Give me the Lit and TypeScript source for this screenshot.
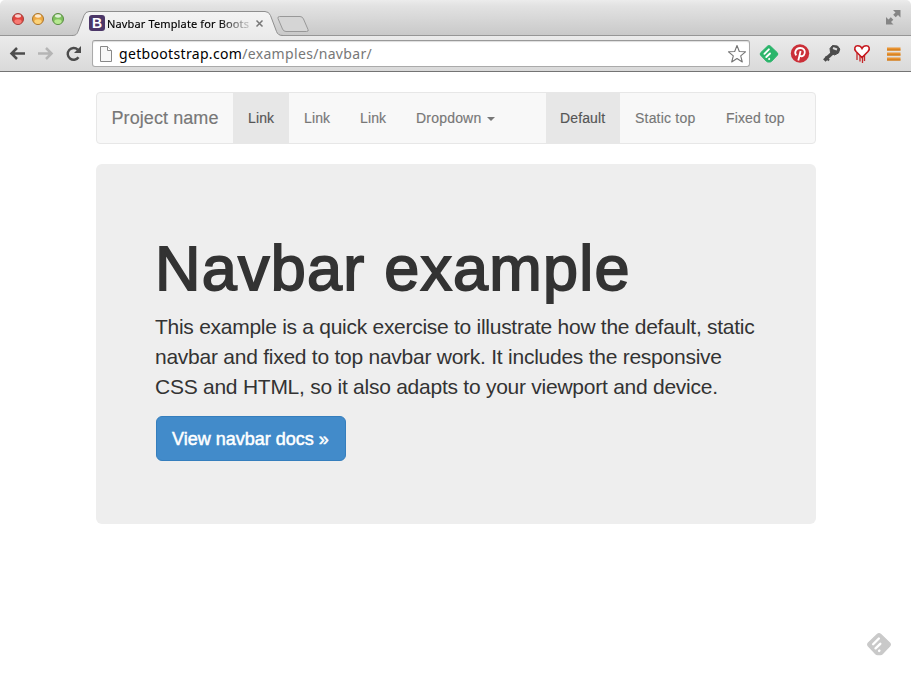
import { LitElement, html, css, svg } from "lit";
import { customElement } from "lit/decorators.js";

const feedly = (fill: string, ink: string) => svg`
  <path d="M8.6 1.1Q10 0 11.4 1.1L18.3 7.7Q19.4 9 18.3 10.3L12.6 16.3Q12 17 11 17H9Q8 17 7.4 16.3L1.7 10.3Q.6 9 1.7 7.7Z" fill=${fill} stroke=${fill} stroke-linejoin="round"/>
  <g stroke=${ink} stroke-width="1.900" stroke-linecap="round">
    <path d="M5.4 8.800 9.900 4.300M7.300 12 11 8.500M10.100 14 10.300 13.800"/>
  </g>`;

@customElement("browser-tabs")
class BrowserTabs extends LitElement {
  static styles = css`
    :host {
      display: flex;
      height: 36px;
      box-sizing: border-box;
      background: linear-gradient(#ececec 0, #e2e2e2 6px, #c9c9c9 35px, #969696 35px);
      border-radius: 5px 5px 0 0;
      font-family: "Noto Sans", "Open Sans", sans-serif;
    }
    .lights { width: 75px; padding: 12px 0 0 11px; box-sizing: border-box; }
    svg { display: block; }
    .tab { position: relative; width: 208px; height: 36px; }
    .shape { position: absolute; left: -3px; top: 0; }
    .content { position: relative; display: flex; padding: 15px 0 0 14px; }
    .favicon {
      width: 16px; height: 16px; border-radius: 3px; background: #4c3768; color: #fff;
      font: bold 14px/16px "Liberation Sans", sans-serif; text-align: center;
    }
    .title {
      width: 142px; margin-left: 2px; overflow: hidden; white-space: nowrap;
      font-size: 11px; line-height: 18px; color: #000; letter-spacing: 0.14px;
      -webkit-text-stroke: 0.15px #000;
      -webkit-mask-image: linear-gradient(90deg, #000 112px, transparent 148px);
    }
    .close { margin: 4px 0 0 6px; }
    .new { margin: 15px 0 0 -7px; }
    .full { margin: 10px 10px 0 auto; }
  `;
  light(x: number, edge: string, mid: string, glow: string) {
    return svg`<circle cx=${x} cy="7" r="5.5" fill=${mid} stroke=${edge}/>
      <ellipse cx=${x} cy="9.6" rx="3.6" ry="2.4" fill=${glow} opacity=".75"/>
      <ellipse cx=${x} cy="4" rx="3" ry="1.7" fill="#fff" opacity=".75"/>`;
  }
  render() {
    return html`
      <div class="lights">
        <svg width="56" height="14">
          ${this.light(7, "#a3403c", "#e0443e", "#ff8c86")}
          ${this.light(27, "#a9752c", "#eda843", "#ffe08a")}
          ${this.light(47, "#5a8c45", "#7fc05f", "#c8f5a0")}
        </svg>
      </div>
      <div class="tab">
        <svg class="shape" width="214" height="36">
          <defs><linearGradient id="g" x2="0" y2="1"><stop stop-color="#f4f4f4"/><stop offset="1" stop-color="#ebebeb"/></linearGradient></defs>
          <path d="M0 36V35.5C4 35.5 5 34 6 31.5L12 15.5Q13.5 11.5 17 11.5H193Q197 11.5 198.500 15.500L204.500 31.500C205.500 34 207 35.500 211 35.500V36Z" fill="url(#g)"/>
          <path d="M0 35.5C4 35.5 5 34 6 31.5L12 15.5Q13.5 11.5 17 11.5H193Q197 11.5 198.500 15.500L204.500 31.500C205.500 34 207 35.500 211 35.500" fill="none" stroke="#8f8f8f"/>
        </svg>
        <div class="content">
          <div class="favicon">B</div>
          <div class="title">Navbar Template for Boots</div>
          <svg class="close" width="9" height="9"><path d="M1.500 1.500 7.500 7.500M7.500 1.500 1.500 7.500" stroke="#777" stroke-width="1.500"/></svg>
        </div>
      </div>
      <svg class="new" width="36" height="19">
        <path d="M3.500 1.500H24Q26.500 1.500 27.500 4L32 14.500Q33 16.500 30.500 16.500H10Q7.500 16.500 6.500 14L2 3.500Q1.500 1.500 3.500 1.500Z" fill="#d5d5d5" stroke="#989898"/>
      </svg>
      <svg class="full" width="15" height="15" fill="#858585">
        <path d="M7 0H14.500V7.500L12 5 9.700 7.300 7.200 4.800 9.500 2.500ZM7.500 14.500H0V7L2.500 9.500 4.800 7.200 7.300 9.700 5 12Z"/>
      </svg>`;
  }
}

@customElement("browser-toolbar")
class BrowserToolbar extends LitElement {
  static styles = css`
    :host {
      display: flex; align-items: center; height: 36px; box-sizing: border-box;
      background: linear-gradient(#ebebeb, #d9d9d9); border-bottom: 1px solid #747474;
      padding: 0 9px; font-family: "Noto Sans", "Open Sans", sans-serif;
    }
    svg { display: block; flex: none; }
    .nav { display: flex; gap: 11px; width: 83px; }
    .address {
      display: flex; align-items: center; width: 658px; height: 27px; box-sizing: border-box;
      border: 1px solid #aaa; border-top-color: #999; border-radius: 3px; background: #fff;
      box-shadow: inset 0 1px 1px #ddd; padding: 0 2px 0 7px;
    }
    .url { flex: 1; margin-left: 7px; font-size: 14px; line-height: 24px; color: #777; white-space: nowrap; letter-spacing: 0.33px; }
    .host { color: #000; }
    .extensions { display: flex; align-items: center; gap: 11px; margin-left: 9px; }
    .menu { margin-left: 4px; }
  `;
  render() {
    return html`
      <div class="nav">
        <svg width="17" height="18" fill="none" stroke="#4c4c4c" stroke-width="2.500"><path d="M16 8.500H2.500M8 3 2.500 8.500 8 14"/></svg>
        <svg width="17" height="18" fill="none" stroke="#b5b5b5" stroke-width="2.500"><path d="M1 8.500H14.500M9 3 14.500 8.500 9 14"/></svg>
        <svg width="17" height="18"><path d="M13.500 12.200A5.900 5.900 0 1 1 12.800 4.700" fill="none" stroke="#4c4c4c" stroke-width="2.400"/><path d="M16 1V8H9Z" fill="#4c4c4c"/></svg>
      </div>
      <div class="address">
        <svg width="12" height="16"><path d="M.5.5H7.500L11.500 4.500V15.500H.5Z" fill="#f7f7f7" stroke="#888"/><path d="M7.500.5V4.500H11.500" fill="#fff" stroke="#888"/></svg>
        <div class="url"><span class="host">getbootstrap.com</span>/examples/navbar/</div>
        <svg width="20" height="20"><path d="M10 1.500 12.300 7.500 18.500 7.800 13.700 11.800 15.300 18 10 14.500 4.700 18 6.300 11.800 1.500 7.800 7.700 7.500Z" fill="#fff" stroke="#747474" stroke-width="1.100" stroke-linejoin="round"/></svg>
      </div>
      <div class="extensions">
        <svg width="20" height="18">${feedly("#2bb56b", "#fff")}</svg>
        <svg width="20" height="20">
          <circle cx="10" cy="9.500" r="9.200" fill="#cb2f38"/>
          <path d="M6.300 11.300C3.900 8.500 5.900 4 10.200 4C13.800 4 15.300 6.500 14.700 9.100C14 12.500 10.800 13 9.700 11.300M10.600 7 8.300 16.500" fill="none" stroke="#fff" stroke-width="1.800"/>
        </svg>
        <svg width="20" height="20">
          <path d="M12 8.500 3.300 16.500" stroke="#4b4b4b" stroke-width="3.600"/><path d="M4.500 12.500 8 16.500" stroke="#4b4b4b" stroke-width="2"/>
          <path d="M9 4.500 11.500 1.500 16.500 2 18.800 5 17.500 9 13.500 11 9.500 8.500Z" fill="#4b4b4b" stroke="#4b4b4b" stroke-linejoin="round"/><path d="M12 4 16 5.500" stroke="#ddd" stroke-width="2.200"/>
        </svg>
        <svg width="20" height="20">
          <path d="M5 9V16M8 12V17.500M10.500 13V19M12.500 11V17" stroke="#c5282a" stroke-width="1.300"/>
          <path d="M10 13.500 4 7.500C1.500 4.500 3 1.800 5.800 1.800C8 1.800 9.300 3 10 4.400C10.700 3 12 1.800 14.200 1.800C17 1.800 18.500 4.500 16 7.500Z" fill="#fff" stroke="#c5161c" stroke-width="1.600"/>
        </svg>
        <svg class="menu" width="14" height="14" fill="#ea9433"><path d="M0 .5H13.500V3.500H0ZM0 5.500H13.500V8.500H0ZM0 10.500H13.500V13.500H0Z"/><path d="M0 3H13.500M0 8H13.500M0 13H13.500" stroke="#c97413"/></svg>
      </div>`;
  }
}

@customElement("site-navbar")
class SiteNavbar extends LitElement {
  static styles = css`
    :host {
      display: flex; height: 52px; box-sizing: border-box; border: 1px solid #e7e7e7;
      border-radius: 4px; background: #f8f8f8; color: #777; padding-right: 15px;
      font: 14px/20px "Liberation Sans", Arial, sans-serif; white-space: nowrap;
      letter-spacing: 0.12px; -webkit-text-stroke: 0.15px;
    }
    .brand { width: 136px; box-sizing: border-box; padding: 15px 0 0 14.500px; font-size: 18px; letter-spacing: 0.08px; }
    .item { box-sizing: border-box; padding: 15px 0 15px 15px; width: 56px; }
    .active { color: #555; background: #e7e7e7; }
    .dropdown { width: 110px; display: flex; align-items: center; letter-spacing: 0.2px; }
    .caret { margin: 2px 0 0 6px; border: 4px solid transparent; border-top-color: #777; border-bottom: 0; }
    .default { width: 74px; margin-left: auto; padding-left: 14px; }
    .static { width: 91px; letter-spacing: 0.2px; }
    .fixed { width: 89px; }
  `;
  render() {
    return html`
      <div class="brand">Project name</div>
      <div class="item active">Link</div>
      <div class="item">Link</div>
      <div class="item">Link</div>
      <div class="item dropdown">Dropdown<span class="caret"></span></div>
      <div class="item active default">Default</div>
      <div class="item static">Static top</div>
      <div class="item fixed">Fixed top</div>`;
  }
}

@customElement("app-root")
class AppRoot extends LitElement {
  static styles = css`
    :host {
      display: flex; flex-direction: column; height: 676px; background: #fff; overflow: hidden;
      font-family: "Liberation Sans", Arial, sans-serif; color: #333;
    }
    main { width: 720px; margin: 20px 0 0 96px; }
    .jumbotron {
      box-sizing: border-box; height: 360px; margin-top: 20px; padding: 69px 59px 0;
      background: #eee; border-radius: 6px; white-space: nowrap;
    }
    h1 { margin: 0; font-size: 63px; line-height: 70px; font-weight: 400; letter-spacing: 1.22px; -webkit-text-stroke: 1.800px #333; }
    p { margin: 9px 0 14px; font-size: 21px; line-height: 30px; }
    .line { display: block; letter-spacing: -0.25px; }
    .line:first-child { letter-spacing: -0.275px; }
    .button {
      display: inline-block; box-sizing: border-box; width: 190px; height: 45px; margin-left: 1px;
      border: 1px solid #357ebd; border-radius: 6px; background: #428bca; color: #fff;
      padding: 10px 0 0 15px; font-size: 18px; line-height: 24px; -webkit-text-stroke: 0.500px #fff;
    }
    .mark { margin: auto 19px 20px auto; display: block; }
  `;
  render() {
    return html`
      <browser-tabs></browser-tabs>
      <browser-toolbar></browser-toolbar>
      <main>
        <site-navbar></site-navbar>
        <section class="jumbotron">
          <h1>Navbar example</h1>
          <p>
            <span class="line">This example is a quick exercise to illustrate how the default, static</span>
            <span class="line">navbar and fixed to top navbar work. It includes the responsive</span>
            <span class="line">CSS and HTML, so it also adapts to your viewport and device.</span>
          </p>
          <a class="button">View navbar docs »</a>
        </section>
      </main>
      <svg class="mark" width="26" height="23" viewBox="0 0 20 18">${feedly("#c9c9c9", "#fff")}</svg>`;
  }
}
